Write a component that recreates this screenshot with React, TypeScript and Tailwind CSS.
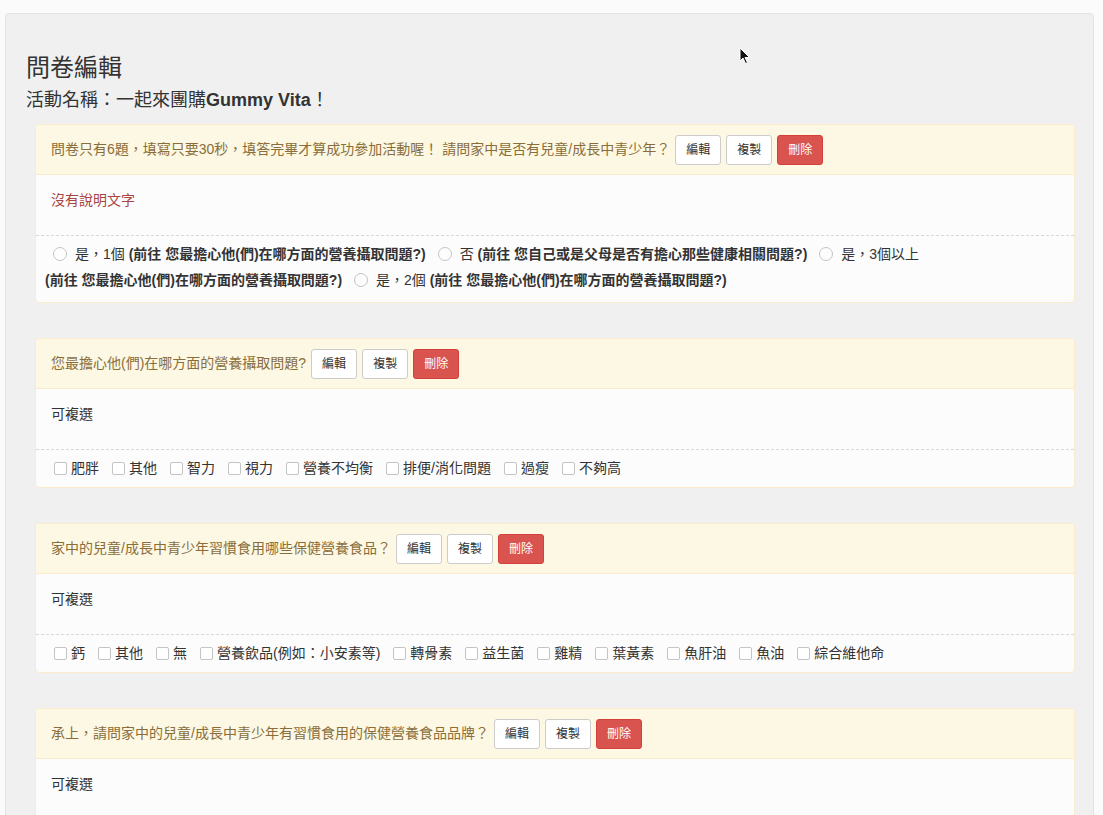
import React from "react";

const FONT = "font-['Liberation_Sans','Noto_Sans_CJK_TC',sans-serif]";

function Btn({ children, danger }: { children: React.ReactNode; danger?: boolean }) {
  return (
    <span
      className={
        "inline-flex h-[30px] items-center justify-center rounded-[3px] border px-[10px] text-[12px] leading-none " +
        (danger ? "border-[#d43f3a] bg-[#d9534f] text-white" : "border-[#cccccc] bg-white text-[#333]")
      }
    >
      {children}
    </span>
  );
}

function Panel({
  title,
  desc,
  red,
  children,
  footerClass,
}: {
  title: string;
  desc: string;
  red?: boolean;
  children?: React.ReactNode;
  footerClass?: string;
}) {
  return (
    <div className="w-[1040px] overflow-hidden rounded-[4px] border border-[#faebcc] bg-[#fcfcfc]">
      <div className="flex h-[50px] items-center border-b border-[#faebcc] bg-[#fcf8e3] pl-[15px]">
        <span className="text-[14px] text-[#8a6d3b]">{title}</span>
        <div className="ml-[5px] flex gap-[5px]">
          <Btn>編輯</Btn>
          <Btn>複製</Btn>
          <Btn danger>刪除</Btn>
        </div>
      </div>
      <div className={"h-[60px] px-[15px] pt-[15px] text-[14px] leading-[20px] " + (red ? "text-[#a94442]" : "text-[#333]")}>
        {desc}
      </div>
      {children !== undefined && (
        <div className={"border-t border-dashed border-[#d8d8d8] text-[14px] leading-[26px] text-[#333] " + (footerClass ?? "")}>
          {children}
        </div>
      )}
    </div>
  );
}

function Radio({ label, go }: { label: string; go: string }) {
  return (
    <>
      <span className="ml-[8px] mr-[8px] inline-block h-[14px] w-[14px] rounded-full border border-[#c4c4c4] bg-[#fdfdfd] align-[-2px]" />
      {label} <b className="whitespace-nowrap font-bold">{go}</b>{" "}
    </>
  );
}

function Checks({ items }: { items: string[] }) {
  return (
    <div className="flex flex-wrap items-center gap-x-[13px] pl-[18px]">
      {items.map((t) => (
        <span key={t} className="flex items-center">
          <span className="mr-[4px] inline-block h-[13px] w-[13px] rounded-[2px] border border-[#c4c4c4] bg-white" />
          {t}
        </span>
      ))}
    </div>
  );
}

export default function App() {
  const go1 = "(前往 您最擔心他(們)在哪方面的營養攝取問題?)";
  return (
    <div className={"relative h-[815px] w-[1103px] overflow-hidden bg-[#fbfbfb] " + FONT}>
      <div className="ml-[5px] mt-[13px] h-[900px] w-[1089px] rounded-[4px] border border-[#e3e3e3] bg-[#f0f0f0] pl-[20px] pt-[40px]">
        <div className="h-[27px] text-[24px] leading-[27px] text-[#333]">問卷編輯</div>
        <div className="mt-[7px] h-[24px] text-[18px] leading-[24px] text-[#333]">
          活動名稱：一起來團購<b className="font-bold">Gummy Vita</b>！
        </div>
        <div className="ml-[9px] mt-[12px] flex flex-col gap-[35px]">
          <Panel
            title="問卷只有6題，填寫只要30秒，填答完畢才算成功參加活動喔！ 請問家中是否有兒童/成長中青少年？"
            desc="沒有說明文字"
            red
            footerClass="px-[9px] pt-[5px] pb-[9px]"
          >
            <Radio label="是，1個" go={go1} />
            <Radio label="否" go="(前往 您自己或是父母是否有擔心那些健康相關問題?)" />
            <Radio label="是，3個以上" go={go1} />
            <Radio label="是，2個" go={go1} />
          </Panel>
          <Panel title="您最擔心他(們)在哪方面的營養攝取問題?" desc="可複選" footerClass="pt-[5px] pb-[6px]">
            <Checks items={["肥胖", "其他", "智力", "視力", "營養不均衡", "排便/消化問題", "過瘦", "不夠高"]} />
          </Panel>
          <Panel title="家中的兒童/成長中青少年習慣食用哪些保健營養食品？" desc="可複選" footerClass="pt-[5px] pb-[6px]">
            <Checks
              items={[
                "鈣",
                "其他",
                "無",
                "營養飲品(例如：小安素等)",
                "轉骨素",
                "益生菌",
                "雞精",
                "葉黃素",
                "魚肝油",
                "魚油",
                "綜合維他命",
              ]}
            />
          </Panel>
          <Panel title="承上，請問家中的兒童/成長中青少年有習慣食用的保健營養食品品牌？" desc="可複選" />
        </div>
      </div>
      <svg className="absolute left-[739px] top-[47px]" width="12" height="18" viewBox="0 0 12 18">
        <path d="M1 1 L1 14 L4 11 L6.5 16.5 L8.5 15.5 L6 10.5 L10.5 10.5 Z" fill="#111" stroke="#fff" strokeWidth="1" />
      </svg>
    </div>
  );
}
